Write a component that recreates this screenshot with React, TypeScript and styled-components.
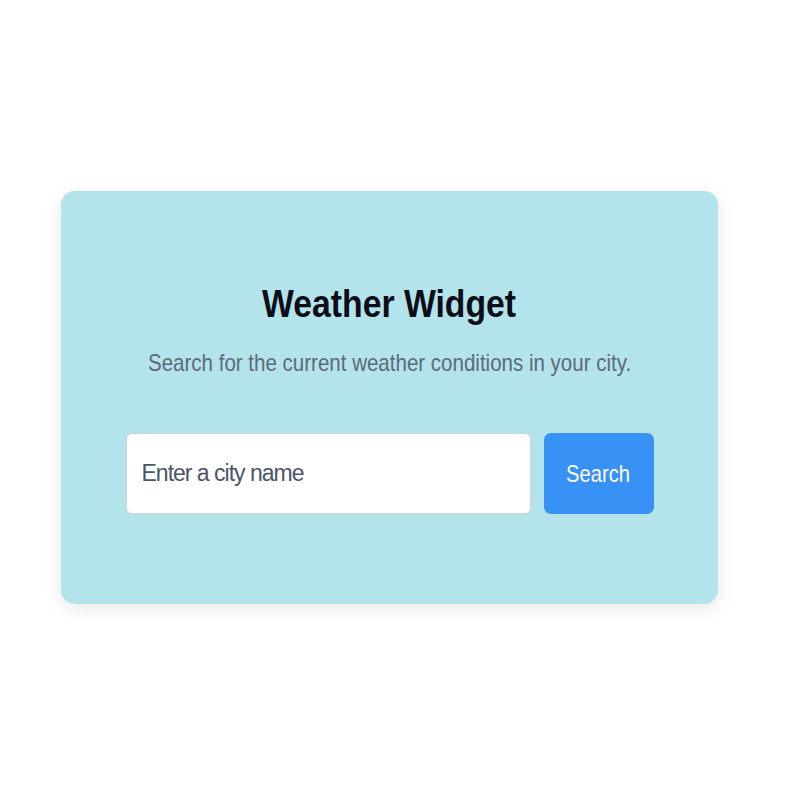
import React from 'react';
import styled, { createGlobalStyle } from 'styled-components';

const GlobalStyle = createGlobalStyle`
  html, body {
    margin: 0;
    padding: 0;
    background: #ffffff;
  }

  body {
    font-family: "Liberation Sans", Arial, sans-serif;
  }
`;

const Page = styled.div`
  min-height: 800px;
  padding: 191px 0 0 61px;
  box-sizing: border-box;
`;

const Card = styled.section`
  width: 657px;
  box-sizing: border-box;
  padding: 89px 0 90px;
  display: flex;
  flex-direction: column;
  align-items: center;
  background: #b3e4eb;
  border-radius: 14px;
  box-shadow: 0 4px 18px rgba(0, 0, 0, 0.1);
`;

const Narrow = styled.span<{ $squeeze: number }>`
  display: inline-block;
  white-space: nowrap;
  transform: scaleX(${(p) => p.$squeeze});
  transform-origin: center;
`;

const Title = styled.h1`
  margin: 0;
  font-size: 38px;
  line-height: 48px;
  font-weight: 700;
  color: #0d0d17;
`;

const Subtitle = styled.p`
  margin: 20px 0 0;
  font-size: 24px;
  line-height: 30px;
  color: #5e6a7a;
`;

const SearchRow = styled.form`
  margin-top: 55px;
  display: flex;
  gap: 13px;
`;

const CityInput = styled.input`
  width: 405px;
  height: 81px;
  box-sizing: border-box;
  padding: 0 15px;
  border: 1px solid #cfd4d6;
  border-radius: 6px;
  background: #ffffff;
  font-family: inherit;
  font-size: 23px;
  letter-spacing: -1px;
  color: #2d3748;
  outline: none;

  &::placeholder {
    color: #4a5568;
  }
`;

const SearchButton = styled.button`
  width: 110px;
  height: 81px;
  padding: 0;
  border: none;
  border-radius: 7px;
  background: #3891f5;
  color: #ffffff;
  font-family: inherit;
  font-size: 24px;
  cursor: pointer;
`;

const App: React.FC = () => {
  return (
    <>
      <GlobalStyle />
      <Page>
        <Card>
          <Title>
            <Narrow $squeeze={0.888}>Weather Widget</Narrow>
          </Title>
          <Subtitle>
            <Narrow $squeeze={0.855}>Search for the current weather conditions in your city.</Narrow>
          </Subtitle>
          <SearchRow onSubmit={(e) => e.preventDefault()}>
            <CityInput type="text" placeholder="Enter a city name" />
            <SearchButton type="submit">
              <Narrow $squeeze={0.84}>Search</Narrow>
            </SearchButton>
          </SearchRow>
        </Card>
      </Page>
    </>
  );
};

export default App;
